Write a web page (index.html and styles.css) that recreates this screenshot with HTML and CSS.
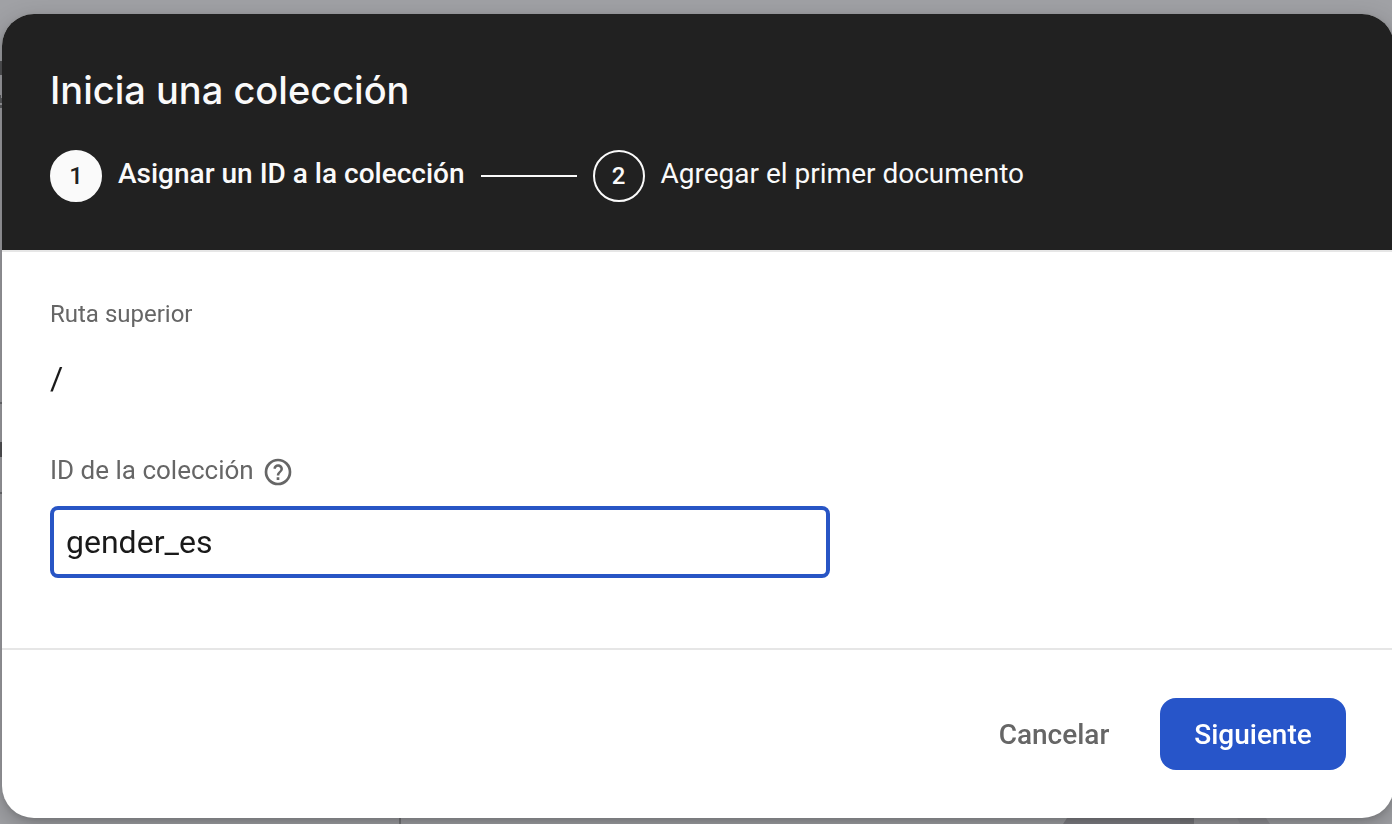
FILE: index.html
```html
<!DOCTYPE html>
<html lang="es">
<head>
<meta charset="utf-8">
<meta name="viewport" content="width=device-width, initial-scale=1">
<title>Inicia una colección</title>
<link rel="stylesheet" href="styles.css">
</head>
<body>
<div class="backdrop" aria-hidden="true">
  <svg class="backdrop-edge" width="2" height="520" viewBox="0 0 2 520">
    <path d="M0 61h2v14H0z" fill="#535456"/>
    <path d="M0 95h1v3h1v5H0zM0 105h2v3H0z" fill="#5c5d60"/>
    <path d="M0 402h2v2H0zM0 492h2v2H0z" fill="#707174"/>
    <path d="M0 442h2v15H0z" fill="#545456"/>
  </svg>
  <svg class="backdrop-floor" viewBox="0 0 1392 6" preserveAspectRatio="none">
    <path d="M399 0h2v6h-2z" fill="#77787b"/>
    <path d="M1067 0h136v6h-140z" fill="#818186"/>
    <path d="M1180 0h14v6h-14z" fill="#79797d"/>
    <path d="M1194 0h43l3 6h-46z" fill="#98989c"/>
    <path d="M1237 0h29l4 6h-30z" fill="#919196"/>
  </svg>
</div>
<main class="dialog" role="dialog" aria-labelledby="dialog-title">
  <header class="dialog-header">
    <h1 class="dialog-title" id="dialog-title">Inicia una colección</h1>
    <ol class="steps">
      <li class="step step-active" aria-current="step">
        <span class="step-number">1</span>
        <span class="step-label">Asignar un ID a la colección</span>
      </li>
      <li class="step-line" role="presentation"></li>
      <li class="step">
        <span class="step-number">2</span>
        <span class="step-label">Agregar el primer documento</span>
      </li>
    </ol>
  </header>
  <form class="dialog-form">
    <div class="dialog-body">
      <div class="path-label">Ruta superior</div>
      <div class="path-value">/</div>
      <div class="field-heading">
        <label class="field-label" for="collection-id">ID de la colección</label>
        <button class="help" type="button" aria-label="Ayuda">
          <svg class="help-icon" viewBox="0 0 24 24" fill="currentColor" aria-hidden="true">
            <path d="M12 2a10 10 0 1 0 0 20 10 10 0 0 0 0-20zm0 18a8 8 0 1 1 0-16 8 8 0 0 1 0 16z"/>
            <path d="M11 16h2v2h-2zM12 6.200c-1.900 0-3.300 1.400-3.500 3.100l1.700.5c.2-1.100.9-1.800 1.800-1.800 1 0 1.800.7 1.800 1.700 0 1.700-2.700 2.100-2.700 4.900h1.900c0-2 2.700-2.500 2.700-5 0-1.900-1.600-3.400-3.700-3.400z"/>
          </svg>
        </button>
      </div>
      <input class="field-input" id="collection-id" type="text" value="gender_es" autocomplete="off" spellcheck="false">
    </div>
    <footer class="dialog-actions">
      <button class="button" type="button">Cancelar</button>
      <button class="button button-primary" type="submit">Siguiente</button>
    </footer>
  </form>
</main>
</body>
</html>
```
FILE: styles.css
```css
* {
  box-sizing: border-box;
}

body {
  margin: 0;
  min-height: 100vh;
  padding: 14px 0 6px 2px;
  display: flex;
  overflow: hidden;
  background: #a0a1a5;
  font-family: Roboto, "Liberation Sans", sans-serif;
  color: #1a1a1a;
}

.backdrop {
  position: fixed;
  inset: 0;
}

.backdrop-edge {
  position: absolute;
  top: 0;
  left: 0;
}

.backdrop-floor {
  position: absolute;
  bottom: 0;
  left: 0;
  width: 100%;
  height: 6px;
}

.dialog {
  position: relative;
  flex: 1;
  margin-right: -2px;
  display: flex;
  flex-direction: column;
  border-radius: 32px;
  background: #fff;
  box-shadow: 0 8px 24px rgba(0, 0, 0, 0.24), 0 2px 6px rgba(0, 0, 0, 0.12);
}

.dialog-header {
  padding: 48px;
  border-radius: 32px 32px 0 0;
  background: #212121;
  color: #fafafa;
}

.dialog-title {
  margin: 0 0 32px;
  font-family: "Google Sans", Inter, sans-serif;
  font-size: 38px;
  font-weight: 500;
  line-height: 56px;
}

.steps {
  display: flex;
  align-items: center;
  gap: 16px;
  margin: 0;
  padding: 0;
  list-style: none;
}

.step {
  display: flex;
  align-items: center;
  gap: 16px;
}

.step-number {
  display: flex;
  align-items: center;
  justify-content: center;
  width: 52px;
  height: 52px;
  border: 2px solid #fafafa;
  border-radius: 50%;
  font-size: 24px;
  font-weight: 500;
}

.step-label {
  padding-bottom: 4px;
  font-size: 28px;
  line-height: 32px;
}

.step-active .step-number {
  background: #fafafa;
  color: #212121;
}

.step-active .step-label {
  font-weight: 500;
}

.step-line {
  width: 96px;
  height: 2px;
  background: #fafafa;
}

.dialog-form {
  flex: 1;
  display: flex;
  flex-direction: column;
}

.dialog-body {
  flex: 1;
  padding: 46px 48px 70px;
  border-top: 2px solid #e6e6e6;
}

.path-label {
  color: #666;
  font-size: 24px;
  line-height: 32px;
}

.path-value {
  margin-top: 28px;
  font-size: 32px;
  line-height: 40px;
}

.field-heading {
  display: flex;
  align-items: center;
  gap: 8px;
  margin: 56px 0 16px;
  color: #666;
}

.field-label {
  padding-bottom: 4px;
  font-size: 26px;
  line-height: 32px;
}

.help {
  display: flex;
  padding: 0;
  border: 0;
  background: none;
  color: inherit;
}

.help-icon {
  width: 32px;
  height: 32px;
}

.field-input {
  display: block;
  width: 100%;
  max-width: 780px;
  height: 72px;
  padding: 0 12px;
  border: 4px solid #2855c5;
  border-radius: 8px;
  outline: 0;
  background: #fff;
  color: #1a1a1a;
  font: 32px Roboto, "Liberation Sans", sans-serif;
}

.dialog-actions {
  display: flex;
  justify-content: flex-end;
  gap: 16px;
  padding: 48px;
  border-top: 2px solid #e6e6e6;
}

.button {
  min-width: 180px;
  height: 72px;
  padding: 0 32px;
  border: 0;
  border-radius: 16px;
  background: none;
  color: #666;
  font: 500 28px Roboto, "Liberation Sans", sans-serif;
}

.button-primary {
  min-width: 186px;
  background: #2755c9;
  color: #fff;
}
```
